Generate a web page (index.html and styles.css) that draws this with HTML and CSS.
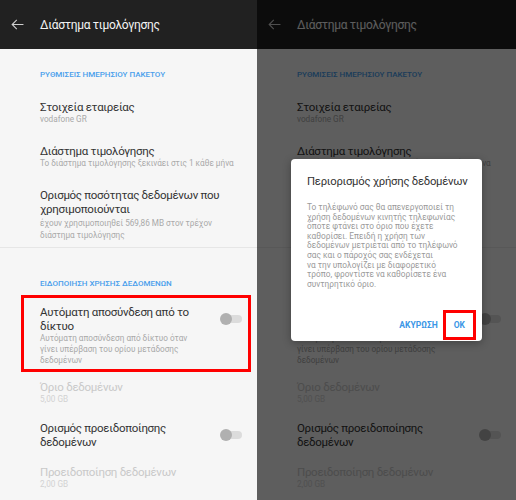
FILE: index.html
```html
<!DOCTYPE html>
<html lang="el">
<head>
<meta charset="utf-8">
<title>Διάστημα τιμολόγησης</title>
<link rel="stylesheet" href="styles.css">
</head>
<body>
  <section class="panel panel--left">
    <header class="appbar">
      <svg class="appbar__back" viewBox="0 0 14 12" aria-hidden="true"><path d="M13.5 6H1.2M6.2 1 1.2 6l5 5" fill="none" stroke="#cfcfcf" stroke-width="1.2"/></svg>
      <h1 class="appbar__title">Διάστημα τιμολόγησης</h1>
    </header>
    <div class="list">
      <div class="label label--first">ΡΥΘΜΙΣΕΙΣ ΗΜΕΡΗΣΙΟΥ ΠΑΚΕΤΟΥ</div>
      <div class="item"><div class="item__text"><div class="item__title">Στοιχεία εταιρείας</div><div class="item__sub">vodafone GR</div></div></div>
      <div class="item"><div class="item__text"><div class="item__title">Διάστημα τιμολόγησης</div><div class="item__sub">Το διάστημα τιμολόγησης ξεκινάει στις 1 κάθε μήνα</div></div></div>
      <div class="item item--last"><div class="item__text item__text--wide"><div class="item__title">Ορισμός ποσότητας δεδομένων που χρησιμοποιούνται</div><div class="item__sub item__sub--loose"> έχουν χρησιμοποιηθεί 569,86 MB στον τρέχον διάστημα τιμολόγησης</div></div></div>
      <div class="divider"></div>
      <div class="label label--second">ΕΙΔΟΠΟΙΗΣΗ ΧΡΗΣΗΣ ΔΕΔΟΜΕΝΩΝ</div>
      <div class="item item--frame item--highlight"><div class="item__text item__text--narrow"><div class="item__title">Αυτόματη αποσύνδεση από το δίκτυο</div><div class="item__sub item__sub--tight">Αυτόματη αποσύνδεση από δίκτυο όταν γίνει υπέρβαση του ορίου μετάδοσης δεδομένων</div></div><span class="toggle"></span></div>
      <div class="item item--low item--disabled"><div class="item__text"><div class="item__title">Όριο δεδομένων</div><div class="item__sub">5,00 GB</div></div></div>
      <div class="item item--low"><div class="item__text item__text--narrow"><div class="item__title">Ορισμός προειδοποίησης δεδομένων</div></div><span class="toggle"></span></div>
      <div class="item item--tail item--disabled"><div class="item__text"><div class="item__title">Προειδοποίηση δεδομένων</div><div class="item__sub">2,00 GB</div></div></div>
    </div>
  </section>

  <section class="panel panel--right">
    <header class="appbar">
      <svg class="appbar__back" viewBox="0 0 14 12" aria-hidden="true"><path d="M13.5 6H1.2M6.2 1 1.2 6l5 5" fill="none" stroke="#cfcfcf" stroke-width="1.2"/></svg>
      <h1 class="appbar__title">Διάστημα τιμολόγησης</h1>
    </header>
    <div class="list">
      <div class="label label--first">ΡΥΘΜΙΣΕΙΣ ΗΜΕΡΗΣΙΟΥ ΠΑΚΕΤΟΥ</div>
      <div class="item"><div class="item__text"><div class="item__title">Στοιχεία εταιρείας</div><div class="item__sub">vodafone GR</div></div></div>
      <div class="item"><div class="item__text"><div class="item__title">Διάστημα τιμολόγησης</div><div class="item__sub">Το διάστημα τιμολόγησης ξεκινάει στις 1 κάθε μήνα</div></div></div>
      <div class="item item--last"><div class="item__text item__text--wide"><div class="item__title">Ορισμός ποσότητας δεδομένων που χρησιμοποιούνται</div><div class="item__sub item__sub--loose"> έχουν χρησιμοποιηθεί 569,86 MB στον τρέχον διάστημα τιμολόγησης</div></div></div>
      <div class="divider"></div>
      <div class="label label--second">ΕΙΔΟΠΟΙΗΣΗ ΧΡΗΣΗΣ ΔΕΔΟΜΕΝΩΝ</div>
      <div class="item item--frame"><div class="item__text item__text--narrow"><div class="item__title">Αυτόματη αποσύνδεση από το δίκτυο</div><div class="item__sub item__sub--tight">Αυτόματη αποσύνδεση από δίκτυο όταν γίνει υπέρβαση του ορίου μετάδοσης δεδομένων</div></div><span class="toggle"></span></div>
      <div class="item item--low item--disabled"><div class="item__text"><div class="item__title">Όριο δεδομένων</div><div class="item__sub">5,00 GB</div></div></div>
      <div class="item item--low"><div class="item__text item__text--narrow"><div class="item__title">Ορισμός προειδοποίησης δεδομένων</div></div><span class="toggle"></span></div>
      <div class="item item--tail item--disabled"><div class="item__text"><div class="item__title">Προειδοποίηση δεδομένων</div><div class="item__sub">2,00 GB</div></div></div>
    </div>
    <div class="scrim">
      <div class="dialog" role="dialog">
        <h2 class="dialog__title">Περιορισμός χρήσης δεδομένων</h2>
        <p class="dialog__body">Το τηλέφωνό σας θα απενεργοποιεί τη<br>χρήση δεδομένων κινητής τηλεφωνίας<br>όποτε φτάνει στο όριο που έχετε<br>καθορίσει. Επειδή η χρήση των<br>δεδομένων μετριέται από το τηλέφωνό<br>σας και ο πάροχός σας ενδέχεται<br>να την υπολογίζει με διαφορετικό<br>τρόπο, φροντίστε να καθορίσετε ένα<br>συντηρητικό όριο.</p>
        <div class="dialog__actions">
          <span class="btn">ΑΚΥΡΩΣΗ</span>
          <span class="btn btn--ok">ΟΚ</span>
        </div>
      </div>
    </div>
  </section>
</body>
</html>
```

FILE: styles.css
```css
* { box-sizing: border-box; margin: 0; padding: 0; }

body {
  width: 516px;
  height: 500px;
  overflow: hidden;
  display: flex;
  background: #000;
  font-family: Roboto, "Noto Sans", sans-serif;
}

.panel {
  position: relative;
  height: 500px;
  overflow: hidden;
  background: #f6f6f6;
}
.panel--left { width: 257px; }
.panel--right { width: 259px; }

.appbar {
  height: 49px;
  background: #212121;
  display: flex;
  align-items: center;
  padding-left: 11px;
}
.appbar__back { width: 13px; height: 11px; margin-right: 16px; }
.appbar__title {
  color: #f4f4f4;
  font-size: 12px;
  letter-spacing: -0.3px;
  font-weight: 400;
}

.label {
  padding-left: 40px;
  font-size: 8px;
  line-height: 12px;
  font-weight: 500;
  color: #4a9fec;
}
.label--first { margin-top: 20px; padding-bottom: 9px; }
.label--second { margin-top: 30px; padding-bottom: 5px; }

.item {
  display: flex;
  align-items: flex-start;
  padding: 10px 8px 9px 40px;
}
.item--last { padding-bottom: 6px; }
.item--low { padding-top: 8px; padding-bottom: 8px; padding-right: 15px; }
.item--tail { padding-top: 8px; }
.item--frame {
  margin: 0 6px 0 21px;
  border: 3px solid transparent;
  padding: 7px 6px 3px 16px;
}
.item--highlight { border-color: #f00; }

.item__text { flex: 1; }
.item__text--wide { flex: 0 0 186px; }
.item__text--narrow { flex: 0 0 165px; }

.item__title {
  font-size: 11.5px;
  letter-spacing: -0.3px;
  line-height: 14px;
  color: #333;
}
.item__sub {
  margin-top: -1px;
  font-size: 8.2px;
  line-height: 12px;
  color: #a9a9a9;
}
.item__sub--loose { margin-top: 1px; }
.item__sub--tight { line-height: 11px; margin-top: 0; }

.item--disabled .item__title { color: #c9c9c9; }
.item--disabled .item__sub { color: #d2d2d2; }

.toggle {
  position: relative;
  margin-left: auto;
  margin-top: 8px;
  width: 22px;
  height: 12px;
  flex: 0 0 22px;
}
.toggle::before {
  content: "";
  position: absolute;
  left: 3px;
  right: 0;
  top: 2px;
  height: 8px;
  border-radius: 4px;
  background: #dcdcdc;
}
.toggle::after {
  content: "";
  position: absolute;
  left: 0;
  top: 0;
  width: 12px;
  height: 12px;
  border-radius: 50%;
  background: #b0b0b0;
}

.divider {
  height: 1px;
  background: #e6e6e6;
}

.scrim {
  position: absolute;
  inset: 0;
  background: rgba(0, 0, 0, 0.62);
  display: flex;
  align-items: center;
  justify-content: center;
}

.dialog {
  width: 191px;
  height: 182px;
  background: #fff;
  border-radius: 4px;
  box-shadow: 0 2px 8px rgba(0, 0, 0, 0.3);
  padding: 16px 0 1px 16px;
  display: flex;
  flex-direction: column;
}
.dialog__title {
  font-size: 11.3px;
  letter-spacing: -0.25px;
  line-height: 14px;
  font-weight: 400;
  color: #333;
  white-space: nowrap;
}
.dialog__body {
  margin-top: 14px;
  font-size: 8.3px;
  line-height: 9.6px;
  color: #9a9a9a;
  white-space: nowrap;
}
.dialog__actions {
  margin-top: auto;
  display: flex;
  justify-content: flex-end;
  padding-right: 6px;
}
.btn {
  font-size: 8.5px;
  font-weight: 700;
  line-height: 24px;
  color: #3b97e6;
  padding: 3px 5px;
}
.btn--ok {
  border: 3px solid #f00;
  padding: 0 8px;
}
```
